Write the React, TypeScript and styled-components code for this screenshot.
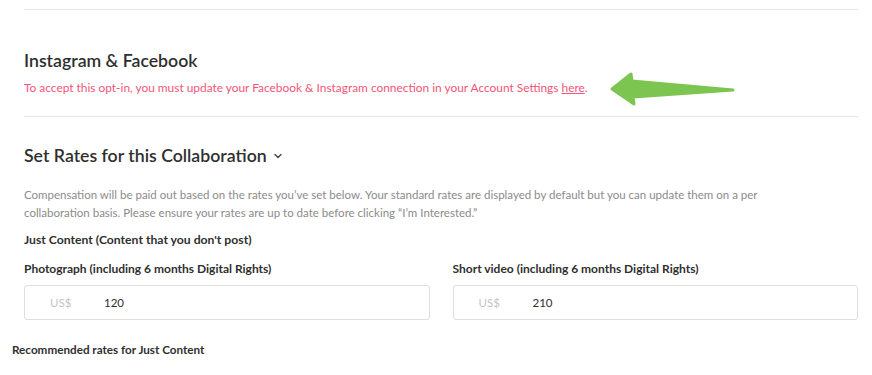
import styled, { createGlobalStyle } from "styled-components";

const GlobalStyle = createGlobalStyle`
  body {
    margin: 0;
    background: #fff;
    font-family: Lato, "Open Sans", sans-serif;
    color: #2f2f2f;
  }
`;

const Page = styled.div`
  padding: 9px 14px 0 12px;
`;

const Section = styled.section<{ $top: number; $bottom?: number }>`
  position: relative;
  margin-left: 12px;
  border-top: 1px solid #e6e6e6;
  padding-top: ${({ $top }) => $top}px;
  padding-bottom: ${({ $bottom = 0 }) => $bottom}px;
`;

const Heading = styled.h2`
  margin: 0;
  font-size: 17.7px;
  font-weight: 600;
  color: #2f2f2f;
  display: flex;
  align-items: center;
  gap: 6px;
`;

const Warning = styled.p`
  margin: 9px 0 0;
  font-size: 11.9px;
  color: #f2557a;

  a {
    color: inherit;
    text-decoration: underline;
  }
`;

const Arrow = styled.svg`
  position: absolute;
  left: 581px;
  top: 57px;
`;

const Intro = styled.p`
  margin: 20px 0 0;
  max-width: 790px;
  font-size: 11.5px;
  line-height: 18px;
  color: #8b8b8b;
`;

const GroupTitle = styled.div`
  margin-top: 10px;
  font-size: 12.2px;
  font-weight: 700;
  color: #2f2f2f;
`;

const RateGrid = styled.div`
  display: grid;
  grid-template-columns: 1fr 1fr;
  column-gap: 23px;
  margin-top: 14px;
`;

const Field = styled.div`
  display: flex;
  flex-direction: column;
  gap: 9px;
`;

const Label = styled.label`
  font-size: 12px;
  font-weight: 700;
  color: #2f2f2f;
`;

const InputBox = styled.div`
  height: 35px;
  box-sizing: border-box;
  border: 1px solid #dedede;
  border-radius: 3px;
  display: flex;
  align-items: center;
  padding-left: 25px;
  font-size: 11.5px;
`;

const Currency = styled.span`
  width: 54px;
  color: #c4c4c4;
`;

const Amount = styled.span`
  color: #2f2f2f;
`;

const Recommended = styled.div`
  margin-top: 22px;
  font-size: 11.7px;
  font-weight: 700;
  color: #2f2f2f;
`;

const Chevron = () => (
  <svg width="10" height="8" viewBox="0 0 10 8" fill="none">
    <path d="M2 2.5 L5 5.5 L8 2.5" stroke="#444" strokeWidth="1.4" strokeLinecap="round" strokeLinejoin="round" />
  </svg>
);

const rates = [
  { label: "Photograph (including 6 months Digital Rights)", value: 120 },
  { label: "Short video (including 6 months Digital Rights)", value: 210 },
];

export default function App() {
  return (
    <Page>
      <GlobalStyle />
      <Section $top={40} $bottom={21}>
        <Heading>Instagram &amp; Facebook</Heading>
        <Warning>
          To accept this opt-in, you must update your Facebook &amp; Instagram connection in your Account Settings{" "}
          <a href="#">here</a>.
        </Warning>
        <Arrow width="132" height="40" viewBox="0 0 132 40">
          <path
            d="M7 22 L26 7 L27 14 L128 23 L28 30 L29 37 Z"
            fill="#7dc551"
            stroke="#7dc551"
            strokeWidth="3"
            strokeLinejoin="round"
          />
        </Arrow>
      </Section>
      <Section $top={28}>
        <Heading>
          Set Rates for this Collaboration <Chevron />
        </Heading>
        <Intro>
          Compensation will be paid out based on the rates you’ve set below. Your standard rates are displayed by
          default but you can update them on a per collaboration basis. Please ensure your rates are up to date before
          clicking “I’m Interested.”
        </Intro>
        <GroupTitle>Just Content (Content that you don't post)</GroupTitle>
        <RateGrid>
          {rates.map((r) => (
            <Field key={r.label}>
              <Label>{r.label}</Label>
              <InputBox>
                <Currency>US$</Currency>
                <Amount>{r.value}</Amount>
              </InputBox>
            </Field>
          ))}
        </RateGrid>
      </Section>
      <Recommended>Recommended rates for Just Content</Recommended>
    </Page>
  );
}
